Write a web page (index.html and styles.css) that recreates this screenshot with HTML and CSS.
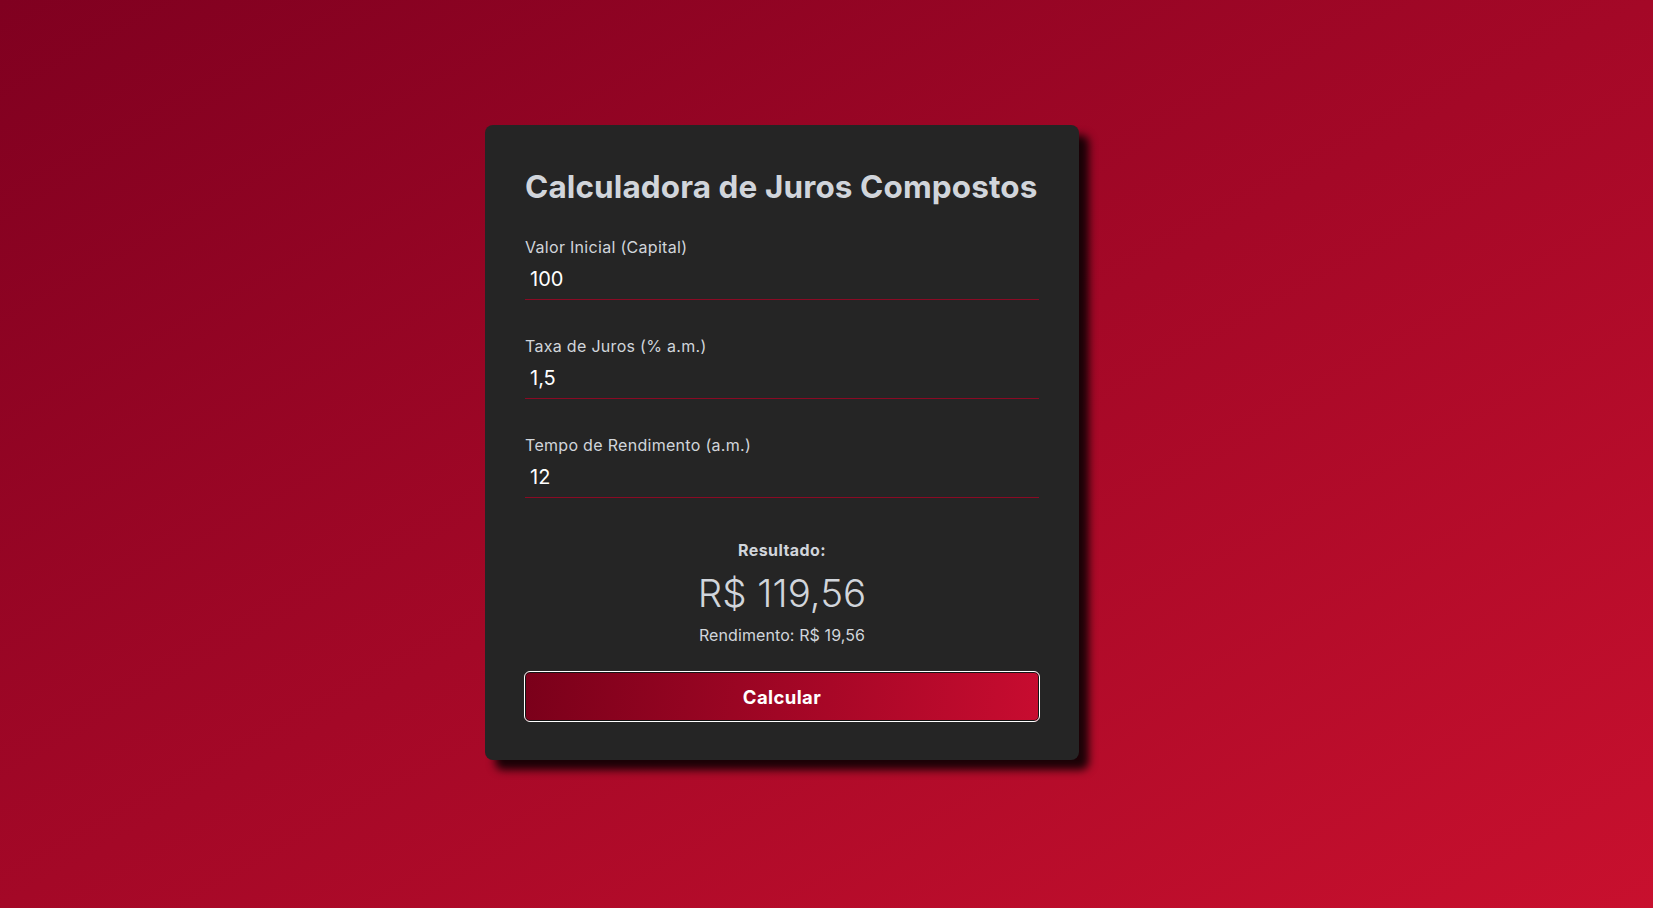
FILE: index.html
```html
<!DOCTYPE html>
<html lang="pt-BR">
<head>
<meta charset="utf-8">
<title>Calculadora de Juros Compostos</title>
<link rel="stylesheet" href="styles.css">
</head>
<body>
<main class="page">
  <section class="card">
    <h1 class="title">Calculadora de Juros Compostos</h1>
    <div class="fields">
      <div class="field">
        <label class="label" for="capital">Valor Inicial (Capital)</label>
        <input class="input" id="capital" type="text" value="100">
      </div>
      <div class="field">
        <label class="label" for="taxa">Taxa de Juros (% a.m.)</label>
        <input class="input" id="taxa" type="text" value="1,5">
      </div>
      <div class="field">
        <label class="label" for="tempo">Tempo de Rendimento (a.m.)</label>
        <input class="input" id="tempo" type="text" value="12">
      </div>
    </div>
    <div class="result">
      <p class="result-label">Resultado:</p>
      <p class="result-value">R$ 119,56</p>
      <p class="result-gain">Rendimento: R$ 19,56</p>
    </div>
    <button class="button" type="button">Calcular</button>
  </section>
</main>
</body>
</html>
```

FILE: styles.css
```css
* {
  box-sizing: border-box;
}

html, body {
  margin: 0;
  height: 100%;
}

body {
  font-family: Inter, "Noto Sans", sans-serif;
  background: linear-gradient(to bottom right, #800020, #c8102e);
  color: #d1d5db;
}

.page {
  min-height: 100vh;
  display: flex;
  align-items: flex-start;
  justify-content: center;
  padding: 125px 89px 0 0;
}

.card {
  width: 594px;
  background: #252525;
  border-radius: 8px;
  padding: 39px 40px 38px;
  box-shadow: 10px 10px 8px rgba(0, 0, 0, 0.85);
  display: flex;
  flex-direction: column;
}

.title {
  margin: 0 0 27px;
  font-size: 31.5px;
  letter-spacing: 0.1px;
  line-height: 45px;
  font-weight: 700;
  color: #d1d5db;
  white-space: nowrap;
}

.fields {
  display: flex;
  flex-direction: column;
  gap: 35px;
}

.field {
  display: flex;
  flex-direction: column;
}

.label {
  font-size: 16px;
  letter-spacing: 0.3px;
  line-height: 22px;
  color: #d1d5db;
}

.input {
  height: 42px;
  border: 0;
  border-bottom: 1px solid #8a0a24;
  background: transparent;
  color: #ffffff;
  font-family: inherit;
  font-size: 20px;
  padding: 0 5px;
  outline: none;
}

.result {
  margin-top: 41px;
  display: flex;
  flex-direction: column;
  align-items: center;
  text-align: center;
}

.result p {
  margin: 0;
}

.result .result-label {
  font-size: 16px;
  letter-spacing: 0.4px;
  line-height: 22px;
  font-weight: 700;
  margin-bottom: 8px;
}

.result .result-value {
  font-size: 38.5px;
  line-height: 48px;
  font-weight: 300;
  color: #d1d5db;
  margin-bottom: 6px;
}

.result .result-gain {
  font-size: 16px;
  letter-spacing: 0.1px;
  line-height: 24px;
}

.button {
  margin: 24px -1px 0;
  height: 51px;
  border: 1px solid #ffffff;
  border-radius: 6px;
  box-shadow: inset 0 0 0 1px #141414;
  background: linear-gradient(100deg, #7a001a, #c80c30);
  color: #ffffff;
  font-family: inherit;
  font-size: 18.5px;
  letter-spacing: 0.4px;
  font-weight: 700;
  cursor: pointer;
}
```
